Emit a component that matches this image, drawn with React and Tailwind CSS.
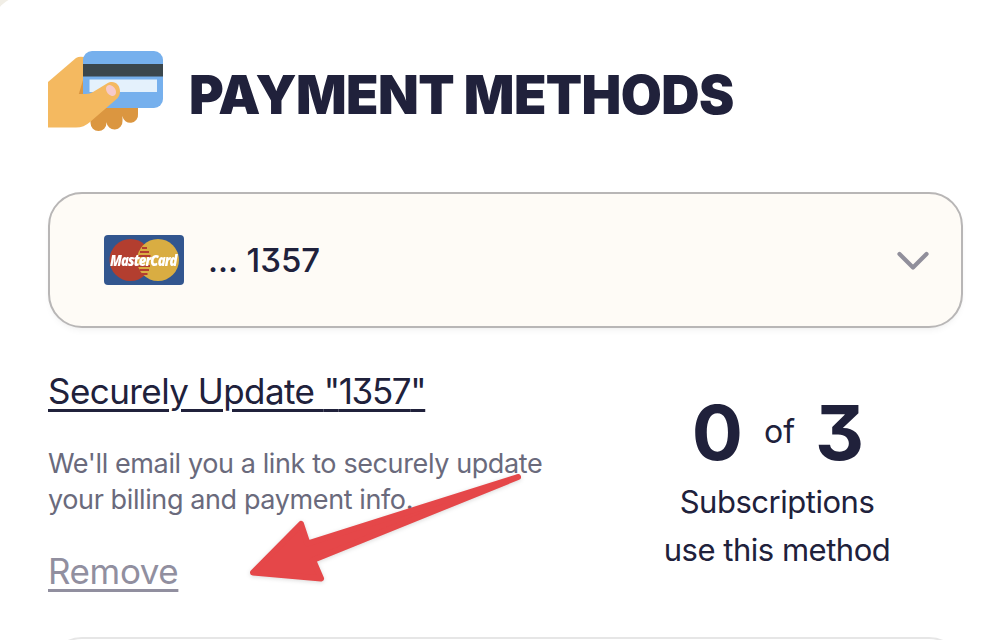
import React from 'react'

const method = { last4: '1357', used: 0, total: 3 }

function CardInHand() {
  return (
    <svg viewBox="0 0 116 82" className="h-[82px] w-[116px] shrink-0">
      <path d="M42 56h48v8a7.700 7.700 0 0 1-15.500 2v5a8 8 0 0 1-16 1v1a8 8 0 0 1-16 0z" fill="#db9640" />
      <path d="M0 32 28 8q3-2 8-1v40l-8 30H0z" fill="#f4b960" />
      <path d="M35 30v15h-4.500z" fill="#db9640" />
      <rect x="35" y="1" width="80" height="57" rx="9" fill="#76b0ed" />
      <rect x="35" y="14" width="80" height="12.500" fill="#3b474d" />
      <rect x="41.500" y="29.500" width="67.500" height="12.500" fill="#e4f1fc" />
      <path d="M0 44h38q4 0 7-2l14-8.500c7-4 13 1 13 8 0 4-2 6.500-4.500 8.500L42 72q-6 5.500-14 5.500H0z" fill="#f4b960" />
      <ellipse cx="63" cy="40.500" rx="4.300" ry="6" transform="rotate(-38 63 40.500)" fill="#f6caca" />
    </svg>
  )
}

function MasterCardLogo() {
  return (
    <span className="relative flex h-[50px] w-20 shrink-0 items-center justify-center">
      <svg viewBox="0 0 80 50" className="absolute inset-0 h-[50px] w-20">
        <rect width="80" height="50" rx="4" fill="#32568f" />
        <circle cx="26.500" cy="25" r="21" fill="#b33e2f" />
        <circle cx="54" cy="25" r="21" fill="#d9ad42" />
        <path d="M38 13h5M36 17h9M34.500 21h12M34 31h12M35.500 35h9.500M37.500 39h6" stroke="#b33e2f" strokeWidth="1.800" />
      </svg>
      <span className="relative right-px scale-x-[0.87] font-['Open_Sans',sans-serif] text-[15px] leading-5 font-extrabold tracking-[-1px] whitespace-nowrap text-white italic">
        MasterCard
      </span>
    </span>
  )
}

function Arrow() {
  return (
    <svg viewBox="0 0 290 124" className="pointer-events-none absolute top-[466px] left-[240px] h-[124px] w-[290px] drop-shadow-sm">
      <path
        d="M13 106.500 61 58l6.500 19.500L278 11 73 94l8 18.500z"
        fill="#e54749"
        stroke="#e54749"
        strokeWidth="6"
        strokeLinejoin="round"
      />
    </svg>
  )
}

export default function App() {
  return (
    <div className="relative h-[640px] w-[1004px] overflow-hidden bg-[#f1eee6] font-[Inter,sans-serif] text-[#20213b] [font-feature-settings:'cv09']">
      <div className="-mt-1 -ml-2 flow-root h-[700px] rounded-tl-[32px] bg-white pt-1 pl-2">
        <div className="ml-12 w-[915px]">
          {/* Title */}
          <div className="flex items-center pt-[50px]">
            <CardInHand />
            <h1 className="ml-[25px] pt-2 text-[53px] leading-[64px] font-black tracking-[-0.600px] whitespace-nowrap">
              PAYMENT METHODS
            </h1>
          </div>

          {/* Selected card */}
          <button className="mt-[60px] flex h-[136px] w-full items-center rounded-[34px] border-2 border-[#b8b6b6] bg-[#fefbf6] pr-[31px] pl-[54px] shadow-md shadow-black/4">
            <MasterCardLogo />
            <span className="ml-6 pt-[2px] text-[33px] font-medium whitespace-nowrap">... {method.last4}</span>
            <svg viewBox="0 0 34 22" className="mt-[2px] ml-auto h-[22px] w-[34px]">
              <path d="m3.500 4 13.500 13.500L30.500 4" fill="none" stroke="#918f9b" strokeWidth="4.200" strokeLinecap="round" strokeLinejoin="round" />
            </svg>
          </button>

          <div className="mt-[39px] flex h-[270px] justify-between">
            <div className="flex flex-col items-start">
              <a className="text-[35px] leading-[48px] font-[430] tracking-[-0.560px] whitespace-nowrap underline decoration-[3px] underline-offset-[5px]">
                Securely Update <span className="tracking-[-1.350px]">"{method.last4}"</span>
              </a>
              <p className="mt-[31px] text-[27px] leading-9 tracking-[-0.390px] whitespace-nowrap text-[#6a6a7c]">
                We'll email you a link to securely update
                <br />
                your billing and payment info.
              </p>
              <a className="mt-[29px] text-[35px] leading-[48px] font-[430] tracking-[-0.400px] text-[#918f9f] underline decoration-[3px] underline-offset-[5px]">
                Remove
              </a>
            </div>

            {/* Usage */}
            <div className="mr-[58px] flex w-[256px] flex-col items-center pt-[25px] text-center">
              <div className="flex items-center pl-[2px] text-[76px] leading-[80px] font-bold">
                <span>{method.used}</span>
                <span className="mr-5 ml-[21px] text-[32px] font-normal">of</span>
                <span>{method.total}</span>
              </div>
              <div className="mt-[6px] text-[31px] leading-[48px] font-[430] tracking-[-0.480px] whitespace-nowrap">
                Subscriptions
                <br />
                use this method
              </div>
            </div>
          </div>

          <div className="h-[136px] rounded-[34px] border-2 border-[#e6e6e6]" />
        </div>
      </div>
      <Arrow />
    </div>
  )
}
